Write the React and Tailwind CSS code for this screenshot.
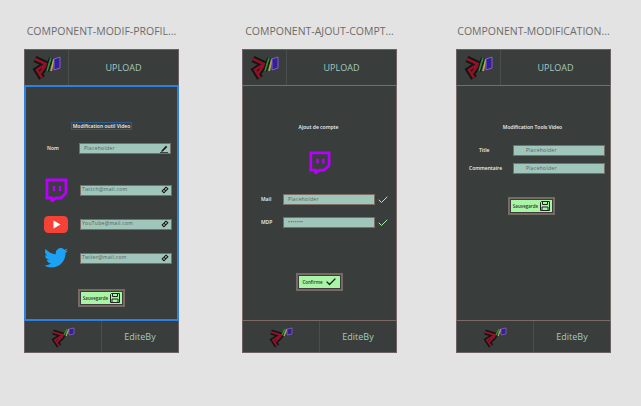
import { Check } from 'lucide-react';

const Logo = () => (
  <svg width="30" height="26" viewBox="0 0 30 26" fill="none">
    <path d="M3 4 L14 9 L5 15 L10 23 M14 10 L7 20" stroke="#141414" strokeWidth="6.500" />
    <path d="M3 4 L14 9 L5 15 L10 23 M14 10 L7 20" stroke="#8f1226" strokeWidth="2.600" />
    <path d="M15 16 L19 3" stroke="#141414" strokeWidth="4" />
    <path d="M15 16 L19 3" stroke="#2c8a3c" strokeWidth="1.800" />
    <path d="M19 16 L22 4" stroke="#b5a65a" strokeWidth="1.800" />
    <path d="M22 4 L28 2 L28 13 L22 15 Z" fill="#2f2390" stroke="#8a5ad0" />
  </svg>
);

const FooterLogo = () => (
  <svg width="24" height="22" viewBox="0 0 24 22" fill="none">
    <path d="M2 6 L12 9 L4 14 L8 20 M12 10 L5 17" stroke="#141414" strokeWidth="5" />
    <path d="M2 6 L12 9 L4 14 L8 20 M12 10 L5 17" stroke="#8f1226" strokeWidth="2" />
    <path d="M13 9 L16 3" stroke="#2c8a3c" strokeWidth="1.500" />
    <path d="M15 10 L18 3" stroke="#b5a65a" strokeWidth="1.500" />
    <path d="M18 3 L23 2 L23 8 L18 9 Z" fill="#2f2390" stroke="#8a5ad0" strokeWidth="0.800" />
  </svg>
);

const Twitch = ({ size = 23 }) => (
  <svg width={size} height={size} viewBox="0 0 24 24" fill="none">
    <path d="M3 2 H22 V15 L17 20 H12 L8 23 V20 H3 Z" stroke="#b900ff" strokeWidth="2.800" />
    <path d="M10 8 V13 M16 8 V13" stroke="#b900ff" strokeWidth="2.400" />
  </svg>
);

const Youtube = () => (
  <svg width="24" height="17" viewBox="0 0 24 17">
    <rect width="24" height="17" rx="4.500" fill="#f44336" />
    <path d="M9.500 4.500 L16.500 8.500 L9.500 12.500 Z" fill="#fff" />
  </svg>
);

const Twitter = () => (
  <svg width="24" height="20" viewBox="0 0 24 20">
    <path
      d="M24 2.400c-.9.4-1.800.7-2.800.8 1-.6 1.800-1.600 2.200-2.700-1 .6-2 1-3.100 1.200A4.900 4.900 0 0 0 11.900 6.200C7.800 6 4.200 4 1.700.9c-1.300 2.200-.7 5.100 1.500 6.600-.8 0-1.500-.2-2.200-.6 0 2.400 1.700 4.400 3.900 4.900-.7.200-1.500.2-2.200.1.600 2 2.400 3.400 4.600 3.400A9.900 9.900 0 0 1 0 17.300 14 14 0 0 0 7.500 19.500c9.100 0 14.300-7.700 14-14.600 1-.7 1.800-1.500 2.500-2.500z"
      fill="#1da1f2"
    />
  </svg>
);

const LinkIcon = () => (
  <svg width="8" height="8" viewBox="0 0 10 10" fill="none" className="shrink-0">
    <path d="M1.500 6.200 L3.800 3.900 L6 6.100 L3.700 8.500 Z M4 3.700 L6.300 1.400 L8.600 3.600 L6.300 5.900" stroke="#151515" strokeWidth="1.300" />
  </svg>
);

const Pencil = () => (
  <svg width="8" height="8" viewBox="0 0 10 10" className="shrink-0">
    <path d="M2 7 L7.500 1 L9 2.500 L3.500 8 L1.500 8.300 Z" fill="#151515" />
    <path d="M0 9.500 H10" stroke="#151515" />
  </svg>
);

const Save = () => (
  <svg width="10" height="10" viewBox="0 0 10 10" fill="none" className="shrink-0">
    <path d="M.5 1.500 L1.500 .5 H9.500 V9.500 H.5 Z" stroke="#222" />
    <path d="M2.500 .5 V3.500 H7.500 V.5 M2 9.500 V6 H8 V9.500" stroke="#222" />
  </svg>
);

const Field = ({ text, indent = 'pl-1', icon, className = '' }) => (
  <div className={`flex h-[11px] w-[92px] items-center justify-between border border-[#7d6d64] bg-[#a0c5ba] pr-0.5 text-[5px] tracking-[0.3px] text-[#55625e] ${indent} ${className}`}>
    <span>{text}</span>
    {icon}
  </div>
);

const SaveButton = ({ label = 'Sauvegarde', icon = <Save />, className = '' }) => (
  <div className={`h-[18px] w-[47px] border-2 border-[#766a62] p-px ${className}`}>
    <div className="flex h-full items-center justify-center gap-0.5 bg-[#a8f5a5] text-[4.500px] font-semibold text-[#333]">
      {label}
      {icon}
    </div>
  </div>
);

const Phone = ({ title, children, bodyBorder = 'border border-[#7d6a66]' }) => (
  <div className="flex w-[155px] flex-col">
    <div className="flex h-[49px] items-end justify-center whitespace-nowrap pb-[9px] text-[10.500px] text-[#6b6b6b]">{title}</div>
    <div className="flex h-[304px] flex-col bg-[#393d3c] text-[#f0f0f0]">
      <div className="flex h-[36px] border border-b-0 border-[#6c5f66]">
        <div className="flex w-[44px] items-center justify-center border-r border-[#4b4e4d]">
          <Logo />
        </div>
        <div className="flex flex-1 items-center justify-center text-[9px] text-[#a6c9bf]">UPLOAD</div>
      </div>
      <div className={`h-[236px] ${bodyBorder}`}>{children}</div>
      <div className="flex h-[32px] border border-t-0 border-[#6c5f66]">
        <div className="flex w-[77px] items-center justify-center border-r border-[#4b4e4d]">
          <FooterLogo />
        </div>
        <div className="flex flex-1 items-center justify-center text-[9px] text-[#a6c9bf]">EditeBy</div>
      </div>
    </div>
  </div>
);

const SocialRow = ({ icon, text, className = '' }) => (
  <div className={`flex h-[24px] items-center ${className}`}>
    <div className="flex w-[54px] justify-center pl-[6px]">{icon}</div>
    <Field text={text} indent="pl-[1px]" icon={<LinkIcon />} />
  </div>
);

const App = () => {
  return (
    <div className="flex h-[406px] w-[641px] overflow-hidden bg-[#e3e3e3] pl-[24px] [font-family:'Open_Sans',sans-serif]">
      <Phone title="COMPONENT-MODIF-PROFIL..." bodyBorder="border-2 border-[#2f7fe0]">
        <div className="flex flex-col">
          <div className="mt-[35px] self-center border border-[#2d5a8c] px-px text-[5px] font-semibold leading-[6px]">Modification outil Video</div>
          <div className="mt-[13px] flex h-[11px] items-center">
            <span className="w-[53px] pl-[21px] text-[5px] font-semibold">Nom</span>
            <Field text="Placeholder" indent="pl-[4px]" icon={<Pencil />} />
          </div>
          <SocialRow icon={<Twitch size={24} />} text="Twitch@mail.com" className="mt-[24px]" />
          <SocialRow icon={<Youtube />} text="YouTube@mail.com" className="mt-[10px]" />
          <SocialRow icon={<Twitter />} text="Twiter@mail.com" className="mt-[10px]" />
          <SaveButton className="mt-[19px] self-center" />
        </div>
      </Phone>

      <div className="w-[63px]" />

      <Phone title="COMPONENT-AJOUT-COMPT...">
        <div className="flex flex-col">
          <div className="mt-[38px] self-center pr-[2px] text-[5px] font-semibold leading-[6px]">Ajout de compte</div>
          <div className="mt-[21px] flex justify-center"><Twitch size={23} /></div>
          <div className="mt-[20px] flex h-[11px] items-center">
            <span className="w-[40px] pl-[18px] text-[5px] font-semibold">Mail</span>
            <Field text="Placeholder" />
            <Check size={12} strokeWidth={2} className="ml-[2px] text-[#a8f5a5]" />
          </div>
          <div className="mt-[12px] flex h-[11px] items-center">
            <span className="w-[40px] pl-[18px] text-[5px] font-semibold">MDP</span>
            <Field text="•••••••" />
            <Check size={12} strokeWidth={2} className="ml-[2px] text-[#a8f5a5]" />
          </div>
          <SaveButton
            label="Confirme"
            icon={<Check size={12} strokeWidth={2.500} className="text-[#222]" />}
            className="mt-[45px] self-center"
          />
        </div>
      </Phone>

      <div className="w-[59px]" />

      <Phone title="COMPONENT-MODIFICATION...">
        <div className="flex flex-col">
          <div className="mt-[38px] self-center pr-[2px] text-[5px] font-semibold leading-[6px]">Modification Tools Video</div>
          <div className="mt-[15px] flex h-[11px] items-center">
            <span className="w-[56px] pl-[22px] text-[5px] font-semibold">Title</span>
            <Field text="Placeholder" indent="pl-[12px]" />
          </div>
          <div className="mt-[7px] flex h-[11px] items-center">
            <span className="w-[56px] pl-[12px] text-[5px] font-semibold">Commentaire</span>
            <Field text="Placeholder" indent="pl-[12px]" />
          </div>
          <SaveButton className="mt-[23px] ml-[51px] self-start" />
        </div>
      </Phone>
    </div>
  );
};

export default App;
